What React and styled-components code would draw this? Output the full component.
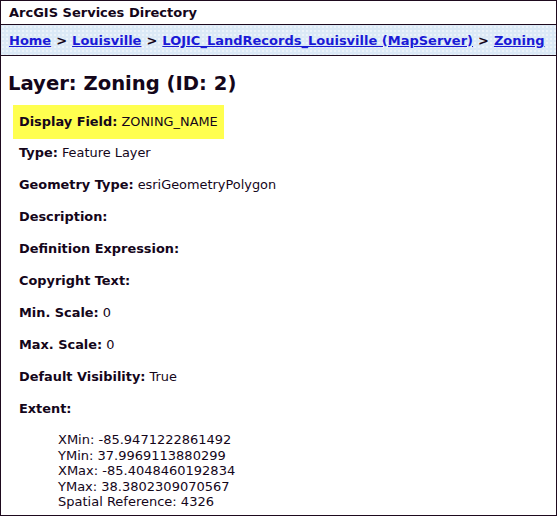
import React from 'react';
import styled, { createGlobalStyle } from 'styled-components';

const GlobalStyle = createGlobalStyle`
  html, body {
    margin: 0;
    padding: 0;
    background: #fff;
  }
  body {
    font-family: Verdana, 'DejaVu Sans', sans-serif;
    color: #14061a;
  }
`;

const Frame = styled.div`
  box-sizing: border-box;
  width: 557px;
  height: 516px;
  border: 1px solid #1e0a1e;
  overflow: hidden;
`;

const TitleBar = styled.div`
  height: 23px;
  padding: 0 8px;
  display: flex;
  align-items: center;
  font-size: 13px;
  font-weight: bold;
  border-bottom: 1px solid #1e0a1e;
`;

const Breadcrumbs = styled.nav`
  height: 30px;
  padding: 0 8px;
  display: flex;
  align-items: center;
  font-size: 13px;
  font-weight: bold;
  white-space: nowrap;
  background-color: #dbe9f6;
  background-image: radial-gradient(circle, rgba(255, 255, 255, 0.7) 0.6px, transparent 0.9px);
  background-size: 4px 4px;
  border-bottom: 1px solid #1e0a1e;
`;

const Crumb = styled.a`
  color: #1a1ad6;
  text-decoration: underline;
`;

const Sep = styled.span`
  margin: 0 5px;
`;

const Content = styled.main`
  padding: 16px 8px 0 6px;
`;

const Heading = styled.h2`
  margin: 0 0 9px 1px;
  font-size: 19.6px;
  font-weight: bold;
  line-height: 24px;
`;

const Fields = styled.ul`
  list-style: none;
  margin: 0;
  padding: 0 0 0 6px;
  font-size: 12.9px;
`;

const Field = styled.li`
  display: ${({ $highlight }) => ($highlight ? 'inline-block' : 'block')};
  background: ${({ $highlight }) => ($highlight ? '#ffff4f' : 'transparent')};
  padding: ${({ $highlight }) => ($highlight ? '9px 6px 10px' : '0 6px')};
  line-height: 15px;
  margin-bottom: ${({ $highlight }) => ($highlight ? '6px' : '17px')};
`;

const Label = styled.b``;

const ExtentList = styled.div`
  margin: 16px 0 0 39px;
  font-size: 13px;
  line-height: 15.6px;
`;

const fields = [
  ['Type:', 'Feature Layer'],
  ['Geometry Type:', 'esriGeometryPolygon'],
  ['Description:', ''],
  ['Definition Expression:', ''],
  ['Copyright Text:', ''],
  ['Min. Scale:', '0'],
  ['Max. Scale:', '0'],
  ['Default Visibility:', 'True'],
];

const extent = [
  'XMin: -85.9471222861492',
  'YMin: 37.9969113880299',
  'XMax: -85.4048460192834',
  'YMax: 38.3802309070567',
  'Spatial Reference: 4326',
];

export default function App() {
  return (
    <>
      <GlobalStyle />
      <Frame>
        <TitleBar>ArcGIS Services Directory</TitleBar>
        <Breadcrumbs>
          <Crumb href="#">Home</Crumb>
          <Sep>&gt;</Sep>
          <Crumb href="#">Louisville</Crumb>
          <Sep>&gt;</Sep>
          <Crumb href="#">LOJIC_LandRecords_Louisville (MapServer)</Crumb>
          <Sep>&gt;</Sep>
          <Crumb href="#">Zoning</Crumb>
        </Breadcrumbs>
        <Content>
          <Heading>Layer: Zoning (ID: 2)</Heading>
          <Fields>
            <Field $highlight>
              <Label>Display Field:</Label> ZONING_NAME
            </Field>
            {fields.map(([label, value]) => (
              <Field key={label}>
                <Label>{label}</Label> {value}
              </Field>
            ))}
            <Field>
              <Label>Extent:</Label>
              <ExtentList>
                {extent.map((line) => (
                  <div key={line}>{line}</div>
                ))}
              </ExtentList>
            </Field>
          </Fields>
        </Content>
      </Frame>
    </>
  );
}
